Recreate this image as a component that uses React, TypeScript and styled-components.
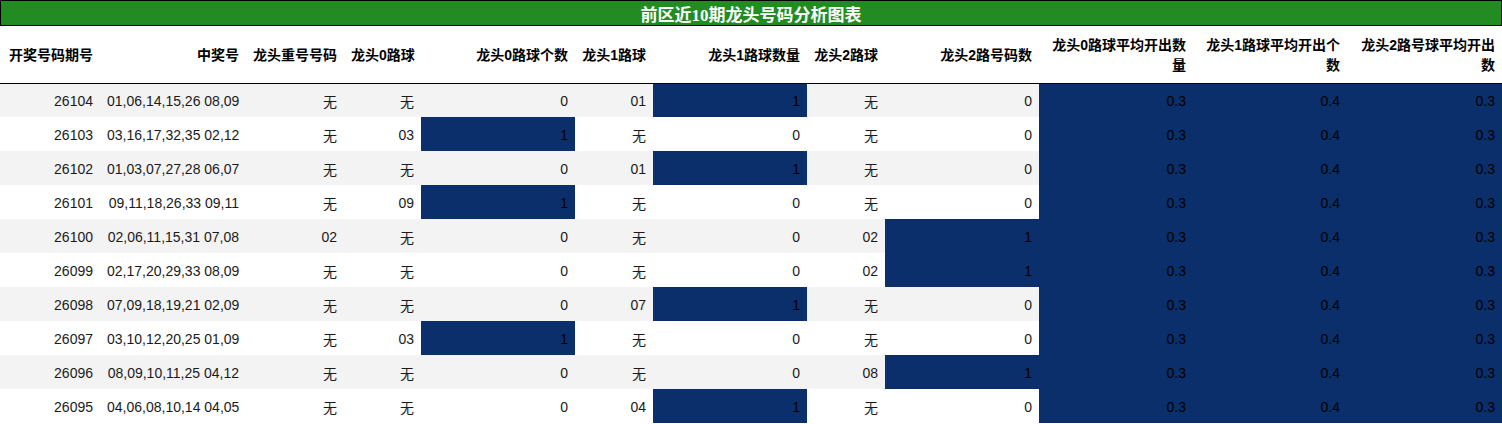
import React from "react";
import styled, { createGlobalStyle } from "styled-components";

const GlobalStyle = createGlobalStyle`
  html, body { margin: 0; padding: 0; background: #ffffff; }
  body { font-family: "Liberation Sans", "Noto Sans CJK SC", sans-serif; }
`;

const WIDTHS = [100, 146, 98, 77, 154, 78, 154, 78, 154, 154, 154, 155];

const Page = styled.div`
  width: 1502px;
  display: flex;
  flex-direction: column;
`;

const TitleBar = styled.div`
  box-sizing: border-box;
  height: 26px;
  margin-bottom: 1px;
  padding-top: 1px;
  background: #228b22;
  border: 1px solid #000;
  display: flex;
  align-items: center;
  justify-content: center;
  color: #ffffff;
  font-family: "Liberation Serif", "Noto Sans CJK SC", serif;
  font-weight: bold;
  font-size: 17px;
`;

const Table = styled.table`
  width: 1502px;
  border-collapse: collapse;
  border-spacing: 0;
  table-layout: fixed;
  font-size: 14px;
  color: #000;
`;

const HeadRow = styled.tr`
  height: 56px;
  border-bottom: 1px solid #000;
`;

const HeadCell = styled.th<{ $wrap?: boolean }>`
  padding: 0 7px;
  text-align: right;
  vertical-align: middle;
  font-weight: bold;
  font-size: 14px;
  line-height: 20px;
  white-space: ${(p) => (p.$wrap ? "normal" : "nowrap")};
  overflow: visible;
`;

const Row = styled.tr<{ $alt: boolean }>`
  height: 34px;
  background: ${(p) => (p.$alt ? "#f3f3f3" : "#ffffff")};
`;

const Cell = styled.td<{ $hi?: boolean }>`
  padding: 1px 7px 0;
  text-align: right;
  vertical-align: middle;
  white-space: nowrap;
  color: ${(p) => (p.$hi ? "#000" : "#1a1a1a")};
  background: ${(p) => (p.$hi ? "#0a2f6a" : "transparent")};
`;

const headers = [
  "开奖号码期号",
  "中奖号",
  "龙头重号号码",
  "龙头0路球",
  "龙头0路球个数",
  "龙头1路球",
  "龙头1路球数量",
  "龙头2路球",
  "龙头2路号码数",
  "龙头0路球平均开出数量",
  "龙头1路球平均开出个数",
  "龙头2路号球平均开出数",
];

type RowData = [string, string, string, string, string, string, string, string, string];

const rows: RowData[] = [
  ["26104", "01,06,14,15,26 08,09", "无", "无", "0", "01", "1", "无", "0"],
  ["26103", "03,16,17,32,35 02,12", "无", "03", "1", "无", "0", "无", "0"],
  ["26102", "01,03,07,27,28 06,07", "无", "无", "0", "01", "1", "无", "0"],
  ["26101", "09,11,18,26,33 09,11", "无", "09", "1", "无", "0", "无", "0"],
  ["26100", "02,06,11,15,31 07,08", "02", "无", "0", "无", "0", "02", "1"],
  ["26099", "02,17,20,29,33 08,09", "无", "无", "0", "无", "0", "02", "1"],
  ["26098", "07,09,18,19,21 02,09", "无", "无", "0", "07", "1", "无", "0"],
  ["26097", "03,10,12,20,25 01,09", "无", "03", "1", "无", "0", "无", "0"],
  ["26096", "08,09,10,11,25 04,12", "无", "无", "0", "无", "0", "08", "1"],
  ["26095", "04,06,08,10,14 04,05", "无", "无", "0", "04", "1", "无", "0"],
];

const averages = ["0.3", "0.4", "0.3"];
const countCols = new Set([4, 6, 8]);

export default function App() {
  return (
    <Page>
      <GlobalStyle />
      <TitleBar>前区近10期龙头号码分析图表</TitleBar>
      <Table>
        <colgroup>
          {WIDTHS.map((w, i) => (
            <col key={i} style={{ width: w }} />
          ))}
        </colgroup>
        <thead>
          <HeadRow>
            {headers.map((h, i) => (
              <HeadCell key={h} $wrap={i >= 9}>
                {h}
              </HeadCell>
            ))}
          </HeadRow>
        </thead>
        <tbody>
          {rows.map((r, ri) => (
            <Row key={r[0]} $alt={ri % 2 === 0}>
              {r.map((v, ci) => (
                <Cell key={ci} $hi={countCols.has(ci) && v === "1"}>
                  {v}
                </Cell>
              ))}
              {averages.map((a, ai) => (
                <Cell key={`a${ai}`} $hi>
                  {a}
                </Cell>
              ))}
            </Row>
          ))}
        </tbody>
      </Table>
    </Page>
  );
}
